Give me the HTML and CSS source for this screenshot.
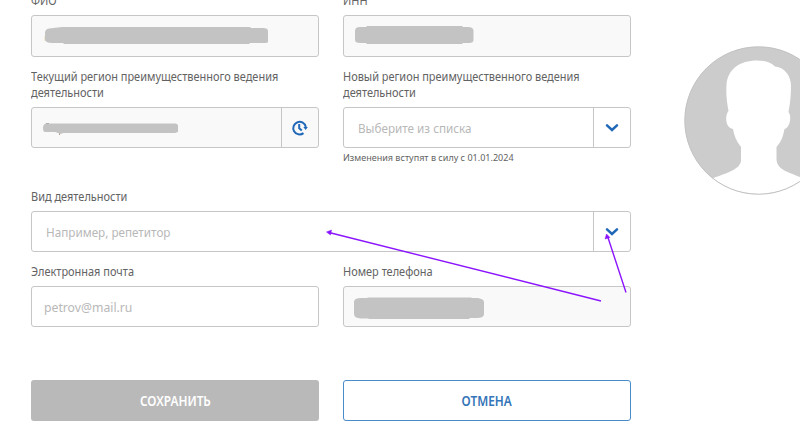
FILE: index.html
```
<!DOCTYPE html>
<html lang="ru">
<head>
    <meta charset="UTF-8">
    <title>Профиль</title>
    <link rel="stylesheet" href="styles.css">
</head>
<body>
    <div class="page">
        <form class="profile-form">
            <div class="row row-names">
                <div class="field">
                    <label>ФИО</label>
                    <div class="control disabled">
                        <svg class="mask" width="286" height="40" fill="#c3c3c3">
                            <path d="M13 20v5" stroke="#f3d9ac"/>
                            <path d="M17 12.500 30 11H218L219 12H231Q236 12 236 15V26Q236 27 231 27H218L217 28H32L31 27H20Q13 27 13 23V17Q13 13 17 12.500z"/>
                        </svg>
                    </div>
                </div>
                <div class="field">
                    <label>ИНН</label>
                    <div class="control disabled">
                        <svg class="mask" width="286" height="40" fill="#c3c3c3">
                            <path d="M16 11H22L23 10H118L119 11H124Q129.500 11 129.500 15V24Q129.500 27 125 27H119L118 28H23L22 27H16Q11 27 11 24V15Q11 11 16 11z"/>
                        </svg>
                    </div>
                </div>
            </div>

            <div class="row row-region">
                <div class="field">
                    <label>Текущий регион преимущественного ведения<br>деятельности</label>
                    <div class="control disabled">
                        <svg class="mask" width="248" height="39" fill="#c3c3c3">
                            <path d="M14 15.500h3" stroke="#999"/>
                            <path d="M27.500 24v3" stroke="#b79a83"/>
                            <path d="M14 15.500H144L146 17V24L143 25H31L29 26 23 24H13Q11 24 11 20Q11 16 14 15.500z"/>
                        </svg>
                        <div class="addon">
                            <svg width="18" height="18" fill="none" stroke="#2169b8" stroke-width="2">
                                <path d="M12.500 14.100A6.300 6.300 0 1 1 14.800 8"/>
                                <path d="M8.200 5V9.200L10.800 11.600"/>
                                <path d="M12.300 8H16.800L14.700 11z" fill="#2169b8" stroke="none"/>
                            </svg>
                        </div>
                    </div>
                </div>
                <div class="field">
                    <label>Новый регион преимущественного ведения<br>деятельности</label>
                    <div class="control">
                        <span class="placeholder">Выберите из списка</span>
                        <div class="addon">
                            <svg class="chevron" width="14" height="10"><path d="M2 2.300 7 7 12 2.300"/></svg>
                        </div>
                    </div>
                    <div class="hint">Изменения вступят в силу с 01.01.2024</div>
                </div>
            </div>

            <div class="row row-activity">
                <div class="field">
                    <label>Вид деятельности</label>
                    <div class="control">
                        <span class="placeholder">Например, репетитор</span>
                        <div class="addon">
                            <svg class="chevron" width="14" height="10"><path d="M2 2.300 7 7 12 2.300"/></svg>
                        </div>
                    </div>
                </div>
            </div>

            <div class="row row-contacts">
                <div class="field">
                    <label>Электронная почта</label>
                    <div class="control">
                        <span class="placeholder placeholder-mail">petrov@mail.ru</span>
                    </div>
                </div>
                <div class="field">
                    <label>Номер телефона</label>
                    <div class="control disabled">
                        <svg class="mask" width="286" height="39" fill="#c3c3c3">
                            <path d="M10 15Q10 11 17 11H23L24 10.500H127L128 11H134Q140 12 140 15V27Q140 31 133 31H126L125 32H25L24 31.500H17Q10 31 10 27z"/>
                        </svg>
                    </div>
                </div>
            </div>

            <div class="row row-buttons">
                <button type="button" class="btn btn-save"><span>СОХРАНИТЬ</span></button>
                <button type="button" class="btn btn-cancel"><span>ОТМЕНА</span></button>
            </div>
        </form>

        <div class="avatar">
            <svg width="149" height="149" viewBox="0 0 149 149">
                <defs>
                    <clipPath id="circle"><circle cx="74.500" cy="74.500" r="73.500"/></clipPath>
                </defs>
                <circle cx="74.500" cy="74.500" r="73.800" fill="#cccccc"/>
                <path clip-path="url(#circle)" fill="#fff" d="M44.500 65C42.500 55 42 46 42.500 39C43.500 23 56 14.500 73 14.500C82 14.500 87 16.500 91 20.500C101 21.500 107 30 107 40C107 50 106 58 104.500 66C108 70 106 82 100.500 83C99 91 97 96 92.500 101V113C92.500 124 105 126 118 132L130 149H20L29.500 132C43 127 57 123 57 114V101C52 95 50 89 49 83C41.500 82 40.500 70 44.500 65z"/>
                <circle cx="74.500" cy="74.500" r="73.700" fill="none" stroke="#c2c2c2"/>
            </svg>
        </div>

        <svg class="arrows" width="800" height="440">
            <path d="M601 301 330 232.700M626 292.500 607.800 237"/>
            <path class="head" d="M326.500 232 331.500 230 330.500 235zM606.500 234 605 239 610 237.500z"/>
        </svg>
    </div>
</body>
</html>
```
FILE: styles.css
```
* {
    box-sizing: border-box;
}
body {
    margin: 0;
    background: #fff;
    font-family: "Noto Sans", "Open Sans", sans-serif;
    color: #626262;
}
.page {
    position: relative;
    display: flex;
    width: 800px;
    height: 440px;
    overflow: hidden;
}
.profile-form {
    flex: none;
    width: 600px;
    margin-left: 31px;
    margin-top: -7px;
}
.row {
    display: flex;
    gap: 24px;
}
.field {
    flex: 1;
    min-width: 0;
}
.row-names {
    height: 76px;
}
.row-region {
    height: 120px;
}
.row-activity,
.row-contacts {
    height: 75px;
}
.row-contacts {
    margin-bottom: 41px;
}
/* narrow text */
label,
.hint,
.placeholder,
.btn span {
    transform: scaleX(0.877);
    transform-origin: left center;
    white-space: nowrap;
}
label {
    display: block;
    margin-bottom: 6px;
    font-size: 12.5px;
    line-height: 16px;
}
.control {
    display: flex;
    align-items: center;
    height: 41px;
    border: 1px solid #c6c6c6;
    border-radius: 3px;
    background: #fff;
}
.row-names .control {
    height: 42px;
}
.control.disabled {
    background: #f9f9f9;
}
.mask {
    flex: none;
    display: block;
}
.addon {
    display: flex;
    align-items: center;
    justify-content: center;
    width: 37px;
    height: 100%;
    margin-left: auto;
    border-left: 1px solid #c6c6c6;
    flex: none;
}
.disabled .addon {
    margin-left: 1px;
}
.chevron {
    fill: none;
    stroke: #2169b8;
    stroke-width: 2.5;
    stroke-linecap: round;
}
.placeholder {
    margin-left: 14px;
    color: #b8b8b8;
    font-size: 13px;
    transform: scaleX(0.9);
}
.placeholder-mail {
    margin-left: 12px;
    transform: scaleX(0.94);
}
.hint {
    margin-top: 3px;
    font-size: 9.5px;
    line-height: 14px;
    transform: scaleX(0.95);
}
.btn {
    width: 288px;
    height: 41px;
    padding: 0;
    border-radius: 3px;
    font-family: inherit;
    font-size: 13.5px;
    font-weight: 600;
}
.btn span {
    display: inline-block;
    transform-origin: center;
}
.btn-save {
    border: 0;
    background: #b9b9b9;
    color: #fff;
}
.btn-cancel {
    border: 1px solid #4a8bc9;
    background: #fff;
    color: #3474b8;
}
.avatar {
    flex: none;
    margin-top: 46px;
    margin-left: 53px;
}
.arrows {
    position: absolute;
    top: 0;
    left: 0;
    fill: none;
    stroke: #8b14ff;
    stroke-width: 1.4;
}
.arrows .head {
    fill: #8b14ff;
    stroke-width: 0.5;
}
```
